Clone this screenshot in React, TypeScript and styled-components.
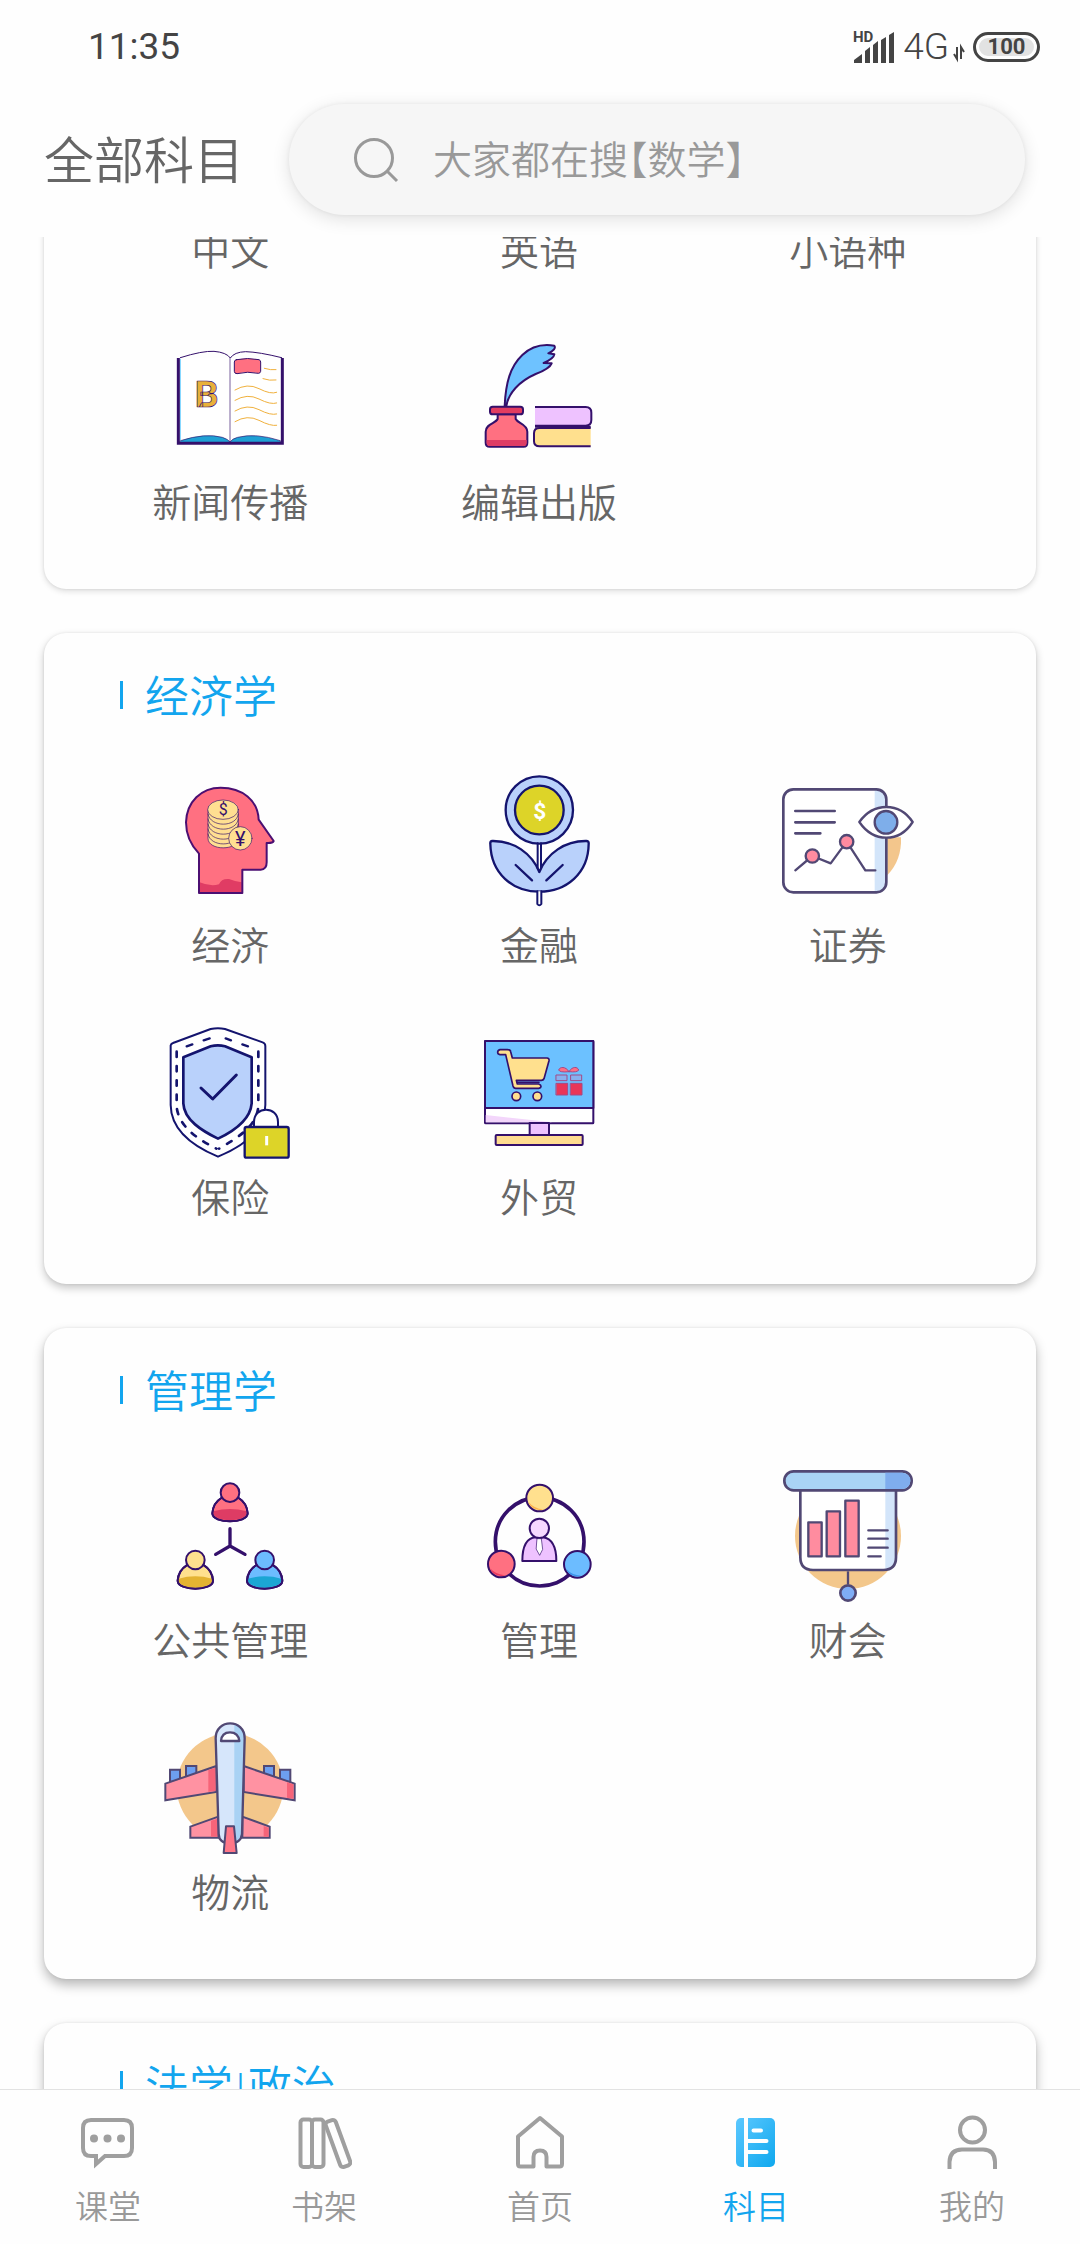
import React from "react";
import styled, { createGlobalStyle } from "styled-components";

const GlobalStyle = createGlobalStyle`
  * { box-sizing: border-box; }
  body {
    margin: 0;
    background: #fefefe;
    color: #666;
    font-family: Roboto, "Noto Sans CJK SC", sans-serif;
    font-weight: 350;
  }
  button, input { font: inherit; color: inherit; border: 0; padding: 0; background: none; }
`;

const Screen = styled.div`
  height: 100vh;
  display: flex;
  flex-direction: column;
  overflow: hidden;
`;

/* ---------- status bar ---------- */

const StatusBar = styled.div`
  flex: none;
  height: 94px;
  padding: 0 40px 0 88px;
  display: flex;
  align-items: center;
  justify-content: space-between;
  color: #444;
  font-size: 37px;
  line-height: 44px;
  font-weight: 400;
`;

const StatusIcons = styled.div`
  display: flex;
  align-items: center;
  gap: 8px;
  font-weight: 350;
`;

const Network = styled.span`
  display: flex;
  align-items: center;
  gap: 4px;
`;

const Battery = styled.div`
  width: 67px;
  height: 30px;
  border: 3px solid #444;
  border-radius: 15px;
  background: #e2e2e2;
  box-shadow: inset 0 0 0 3px #fefefe;
  display: flex;
  align-items: center;
  justify-content: center;
  font-size: 22px;
  line-height: 24px;
  font-weight: 700;
`;

/* ---------- header ---------- */

const Header = styled.header`
  flex: none;
  display: flex;
  align-items: center;
  gap: 45px;
  padding: 10px 55px 22px 44px;
`;

const PageTitle = styled.h1`
  margin: 0;
  padding-top: 5px;
  flex: none;
  font-size: 50px;
  line-height: 60px;
  font-weight: 350;
`;

const SearchPill = styled.label`
  flex: 1;
  min-width: 0;
  height: 111px;
  padding: 0 64px;
  border-radius: 56px;
  background: #f6f6f6;
  box-shadow: 0 4px 18px rgba(0, 0, 0, 0.12), 0 0 4px rgba(0, 0, 0, 0.06);
  display: flex;
  align-items: center;
  gap: 34px;
`;

const SearchInput = styled.input`
  flex: 1;
  min-width: 0;
  padding-top: 3px;
  outline: 0;
  font-size: 39px;
  line-height: 60px;
  font-feature-settings: "halt";
  &::placeholder { color: #999; opacity: 1; }
`;

/* ---------- subject list ---------- */

const ListViewport = styled.main`
  flex: 1;
  min-height: 0;
  overflow: hidden;
`;

const CardList = styled.div`
  margin-top: -7px;
  padding: 0 44px;
  display: flex;
  flex-direction: column;
  gap: 44px;
`;

const shadows = [
  "0 2px 6px rgba(0,0,0,.14), 0 0 3px rgba(0,0,0,.08)",
  "0 4px 9px rgba(0,0,0,.22), 0 0 3px rgba(0,0,0,.08)",
  "0 6px 12px rgba(0,0,0,.28), 0 0 3px rgba(0,0,0,.08)",
];

const Card = styled.section<{ $depth: number; $cut?: boolean }>`
  padding: ${(p) => (p.$cut ? 0 : 36)}px 34px 53px 32px;
  border-radius: ${(p) => (p.$cut ? "0 0 22px 22px" : "22px")};
  background: #fefefe;
  box-shadow: ${(p) => shadows[p.$depth]};
`;

const CardTitle = styled.h2`
  margin: 0;
  padding-left: 44px;
  display: flex;
  align-items: center;
  gap: 22px;
  color: #12a5ee;
  font-size: 44px;
  line-height: 58px;
  font-weight: 350;
`;

const TitleBar = styled.span`
  width: 3px;
  height: 28px;
  margin-bottom: 6px;
  background: #12a5ee;
`;

const Divider = styled.span`
  font-size: 28px;
  line-height: 28px;
  padding: 0 4px;
  vertical-align: 10px;
  font-weight: 400;
`;

const Grid = styled.div`
  display: grid;
  grid-template-columns: repeat(3, 1fr);
`;

const Subject = styled.button<{ $labelOnly?: boolean }>`
  padding: ${(p) => (p.$labelOnly ? 0 : 48)}px 0 10px;
  display: flex;
  flex-direction: column;
  align-items: center;
  gap: 18px;
  font-size: 39px;
  line-height: 44px;
`;

const Art = styled.svg`
  display: block;
  width: 132px;
  height: 132px;
  stroke-linecap: round;
  stroke-linejoin: round;
`;

/* ---------- bottom navigation ---------- */

const Nav = styled.nav`
  flex: none;
  display: grid;
  grid-template-columns: repeat(5, 1fr);
  border-top: 1px solid #e2e2e2;
  background: #fefefe;
`;

const NavItem = styled.button<{ $active?: boolean }>`
  padding: 24px 0 14px;
  display: flex;
  flex-direction: column;
  align-items: center;
  gap: 16px;
  color: ${(p) => (p.$active ? "#12a5ee" : "#999")};
  font-size: 33px;
  line-height: 44px;
`;

const NavIcon = styled.svg`
  display: block;
  width: 56px;
  height: 56px;
  fill: none;
  stroke: #9f9f9f;
  stroke-width: 4;
`;

/* ---------- subject drawings ---------- */

const INK = "#34106b";
const NAVY = "#14146e";
const SLATE = "#514874";

const BookArt = () => (
  <Art viewBox="75 36 396 396" aria-hidden>
    <path d="M118 114V370H430V114" fill="#fff" />
    <path d="M124 362Q200 338 250 352Q268 358 273 366Q280 356 296 352Q350 338 424 362V370H124Z" fill="#1fa0d4" stroke={INK} strokeWidth="2" />
    <path d="M124 118V360" stroke="#6fd0ff" strokeWidth="3" />
    <path d="M118 114V370H430V114" fill="none" stroke={INK} strokeWidth="9" strokeLinecap="butt" strokeLinejoin="miter" />
    <path d="M124 113Q190 92 225 94Q262 97 274 114Q286 96 320 95Q360 96 428 113" fill="none" stroke={INK} strokeWidth="3" />
    <path d="M273 114V364" stroke={INK} strokeWidth="2" />
    <path d="M292 119Q326 112 360 119Q365 121 365 126V154Q364 160 358 160Q326 153 294 161Q286 161 286 154V126Q286 120 292 119Z" fill="#ff7081" stroke={INK} strokeWidth="3" />
    <text x="203" y="260" textAnchor="middle" fontFamily="Roboto, sans-serif" fontWeight="700" fontSize="112" fill="#e8b13a" stroke={INK} strokeWidth="2">B</text>
    <g fill="none" stroke="#f0b13e" strokeWidth="3">
      <path d="M376 145Q396 151 411 149M372 176Q392 183 411 180" />
      <path d="M288 210Q325 188 360 206T413 217M288 241Q325 219 360 237T413 249M288 273Q325 251 360 269T413 282M288 305Q325 283 360 301T413 316" />
    </g>
  </Art>
);

const QuillArt = () => (
  <Art viewBox="1002 36 396 396" aria-hidden>
    <g stroke={INK} strokeWidth="6">
      <path d="M1097 258C1100 190 1113 140 1150 105C1180 76 1215 72 1246 77Q1253 88 1228 100L1246 103Q1244 116 1214 129L1238 130Q1232 146 1190 162C1140 184 1108 220 1102 258" fill="#6ec2ff" />
      <path d="M1076 283V297C1070 310 1040 312 1040 335V368Q1040 380 1052 380H1154Q1165 380 1165 368V335C1165 312 1136 310 1130 297V283Z" fill="#ff7081" />
      <path d="M1043 360H1163V368Q1163 378 1154 378H1052Q1043 378 1043 368Z" fill="#de3c64" stroke="none" />
      <rect x="1053" y="260" width="99" height="23" rx="8" fill="#e23c60" />
      <path d="M1188 261H1340Q1357 261 1357 278V300Q1357 317 1340 317H1188" fill="#eec2ff" strokeLinecap="butt" />
      <path d="M1355 324H1202Q1185 324 1185 340V364Q1185 379 1202 379H1355" fill="#ffe08e" strokeLinecap="butt" />
      <path d="M1188 320H1355" strokeLinecap="butt" />
    </g>
  </Art>
);

const HeadArt = () => (
  <Art viewBox="0 0 396 396" aria-hidden>
    <path d="M105 354V236C80 210 66 180 66 142C68 80 112 38 170 38C235 38 282 76 284 134L329 198Q326 205 308 204V262Q308 284 290 284H235V354Z" fill="#ff7081" />
    <path d="M107 322Q140 336 165 328Q172 310 195 312Q215 320 233 322V352H107Z" fill="#e03c64" />
    <path d="M105 354V236C80 210 66 180 66 142C68 80 112 38 170 38C235 38 282 76 284 134L329 198Q326 205 308 204V262Q308 284 290 284H235V354Z" fill="none" stroke="#4b0f72" strokeWidth="6" />
    <g fill="#ffdf91" stroke={INK} strokeWidth="2">
      <path d="M132 105V190C132 228 223 228 223 190V105Z" />
      <path d="M132 117C138 158 218 158 223 117M132 132C138 173 218 173 223 132M132 147C138 188 218 188 223 147M132 162C138 203 218 203 223 162M132 177C138 217 218 217 223 177" fill="none" />
      <ellipse cx="177" cy="104" rx="46" ry="29" />
      <circle cx="229" cy="190" r="35" />
    </g>
    <g fill={INK} textAnchor="middle" fontFamily="Roboto, sans-serif">
      <text x="178" y="120" fontSize="48" fontWeight="400">$</text>
      <text x="229" y="212" fontSize="60" fontWeight="400">¥</text>
    </g>
  </Art>
);

const FlowerArt = () => (
  <Art viewBox="42 75 396 396" aria-hidden>
    <g stroke={NAVY} strokeWidth="7" fill="#b9d1fb">
      <circle cx="241" cy="180" r="101" />
      <circle cx="241" cy="180" r="73" fill="#ddd428" />
      <path d="M241 366C218 310 165 272 100 273Q93 273 94 282C96 370 160 425 241 425C322 425 388 370 389 282Q390 273 382 273C318 272 264 310 241 366Z" />
      <path d="M170 345L219 391M311 345L262 391" />
      <path d="M236 280V355M246 280V355" strokeWidth="6" />
      <path d="M235 424V462Q241 470 247 462V424" fill="#fff" strokeWidth="6" />
    </g>
    <text x="242" y="206" textAnchor="middle" fontFamily="Roboto, sans-serif" fontSize="68" fontWeight="700" fill="#fff">$</text>
  </Art>
);

const ReportArt = () => (
  <Art viewBox="966 75 396 396" aria-hidden>
    <path d="M1282 376Q1326 330 1323 262H1282Z" fill="#f3c68c" />
    <rect x="970" y="118" width="309" height="309" rx="30" fill="#fff" />
    <path d="M1244 118Q1279 118 1279 150V395Q1279 427 1244 427Z" fill="#d3e5fa" />
    <g fill="none" stroke={SLATE} strokeWidth="8">
      <rect x="970" y="118" width="309" height="309" rx="30" />
      <path d="M1006 183H1124M1006 217H1124M1006 250H1081" />
      <path d="M1006 361L1057 318L1112 340L1160 275L1216 361H1246" strokeWidth="7" />
      <circle cx="1057" cy="318" r="20" fill="#ff8ba0" strokeWidth="7" />
      <circle cx="1160" cy="275" r="20" fill="#ff8ba0" strokeWidth="7" />
      <path d="M1198 216Q1230 171 1279 171T1358 216Q1328 263 1279 263T1198 216Z" fill="#fff" strokeWidth="7" />
      <circle cx="1278" cy="217" r="34" fill="#7eaeea" strokeWidth="7" />
    </g>
  </Art>
);

const ShieldArt = () => (
  <Art viewBox="75 81 396 396" aria-hidden>
    <g fill="none" stroke={NAVY} strokeWidth="6">
      <path d="M95 136Q96 131 102 129L215 87Q237 82 258 87L371 127Q379 130 379 138V315C378 395 310 440 237 470C165 440 96 395 95 315Z" fill="#fff" />
      <path d="M113 155V320C118 380 180 420 232 446M358 155V320C352 380 300 410 240 446" strokeWidth="8" strokeDasharray="16 27" />
      <path d="M143 139L160 133M194 121L212 115M260 115L276 121M310 133L327 139" strokeWidth="7" />
      <path d="M133 172L215 139Q237 133 258 139L338 172V310C334 360 285 393 237 416C190 393 135 360 133 310Z" fill="#b9d1fb" strokeWidth="8" />
      <path d="M186 264L221 297L292 225" strokeWidth="9" />
      <path d="M345 380V366C345 317 417 317 417 366V380" fill="#fff" />
      <rect x="317" y="381" width="132" height="92" rx="6" fill="#ddd428" strokeWidth="7" />
    </g>
    <path d="M383 408V436" stroke="#fff" strokeWidth="9" strokeLinecap="butt" />
  </Art>
);

const ShopArt = () => (
  <Art viewBox="1002 81 396 396" aria-hidden>
    <g stroke={INK} strokeWidth="6">
      <rect x="1038" y="123" width="325" height="247" rx="2" fill="#fff" />
      <path d="M1040 345L1240 367H1040Z" fill="#f3d6fb" stroke="none" />
      <path d="M1038 123H1363V324H1038Z" fill="#6cc1ff" />
      <path d="M1172 369H1230V405H1172Z" fill="#eec2ff" />
      <rect x="1070" y="405" width="261" height="30" rx="3" fill="#ffdc90" />
    </g>
    <g stroke={INK} strokeWidth="5" fill="#ffe08e">
      <path d="M1083 149H1105Q1114 149 1115 155L1120 174H1224Q1231 174 1230 182L1215 236Q1213 241 1207 241H1132L1135 252H1199Q1206 254 1206 259T1199 265H1130Q1124 265 1122 258L1100 164H1083Q1076 163 1076 157T1083 149Z" />
      <path d="M1134 247H1200" />
      <circle cx="1132" cy="289" r="13" />
      <circle cx="1195" cy="289" r="13" />
    </g>
    <g stroke="#a34a86" strokeWidth="3">
      <path d="M1252 250H1286V285H1252ZM1295 250H1329V285H1295Z" fill="#e93558" />
      <path d="M1252 225H1284V242H1252ZM1296 225H1328V242H1296Z" fill="#88b0ee" />
      <path d="M1290 215C1280 198 1262 200 1259 210Q1262 218 1290 215C1300 198 1316 200 1319 210Q1316 218 1290 215Z" fill="#ff6e83" />
    </g>
  </Art>
);

const Person = ({ x, y, top, low }: { x: number; y: number; top: string; low: string }) => (
  <g transform={`translate(${x} ${y})`} stroke={INK} strokeWidth="6">
    <path d="M-26 16C-46 28 -52 48 -53 62C-53 94 53 94 53 62C52 48 46 28 26 16Z" fill={top} />
    <path d="M-50 56Q0 42 50 56C58 92 -58 92 -50 56Z" fill={low} stroke="none" />
    <path d="M-26 16C-46 28 -52 48 -53 62C-53 94 53 94 53 62C52 48 46 28 26 16" fill="none" />
    <circle r="28" fill={top} />
  </g>
);

const PublicArt = () => (
  <Art viewBox="75 30 396 396" aria-hidden>
    <Person x={273} y={98} top="#ff7081" low="#de3c64" />
    <Person x={169} y={300} top="#ffe08e" low="#e4b332" />
    <Person x={377} y={300} top="#6cbcff" low="#1ba6d4" />
    <path d="M273 206V258M230 283L273 258L318 283" fill="none" stroke={INK} strokeWidth="10" />
  </Art>
);

const ManageArt = () => (
  <Art viewBox="1002 30 396 396" aria-hidden>
    <circle cx="1202" cy="245" r="133" fill="none" stroke={INK} strokeWidth="11" />
    <g stroke={INK} strokeWidth="6">
      <circle cx="1202" cy="114" r="40" fill="#ffe08e" />
      <circle cx="1087" cy="312" r="40" fill="#ff7081" />
      <circle cx="1315" cy="313" r="40" fill="#6cbcff" />
      <path d="M1150 303Q1150 235 1190 232H1212Q1252 238 1252 303Z" fill="#eec2ff" />
      <circle cx="1201" cy="205" r="29" fill="#f6d8ff" />
      <path d="M1195 236H1207L1211 268L1202 286L1192 268Z" fill="#fff" strokeWidth="2" />
    </g>
    <path d="M1168 125A36 36 0 0 0 1213 148Q1185 146 1168 125Z" fill="#ffb24d" />
    <path d="M1053 325A36 36 0 0 0 1098 346Q1070 344 1053 325Z" fill="#e8375d" />
    <path d="M1281 326A36 36 0 0 0 1326 347Q1298 345 1281 326Z" fill="#3b93ea" />
  </Art>
);

const FinanceArt = () => (
  <Art viewBox="126 90 396 396" aria-hidden>
    <circle cx="324" cy="288" r="159" fill="#f3c78b" />
    <path d="M181 110H468V352Q468 390 430 390H219Q181 390 181 352Z" fill="#fff" />
    <path d="M436 130H468V352Q466 380 436 388Z" fill="#d3e5fa" />
    <g stroke={SLATE} strokeWidth="8">
      <path d="M181 150V352Q181 390 219 390H430Q468 390 468 352V150" fill="none" />
      <rect x="133" y="94" width="382" height="57" rx="28" fill="#a9d3f5" />
    </g>
    <path d="M436 98H487Q511 101 511 122T487 147H436Z" fill="#7fadee" />
    <g fill="#ff8c9f" stroke={SLATE} strokeWidth="7">
      <path d="M205 247H245V349H205ZM260 214H300V349H260ZM316 182H356V349H316Z" />
      <path d="M385 271H443M385 296H443M385 323H443M385 349H422" />
      <path d="M324 394V432" strokeLinecap="butt" />
      <circle cx="324" cy="459" r="23" fill="#7fadf5" strokeWidth="8" />
    </g>
  </Art>
);

const PlaneArt = () => (
  <Art viewBox="105 66 396 396" aria-hidden>
    <circle cx="303" cy="260" r="160" fill="#f3c78b" />
    <rect x="230" y="380" width="150" height="60" fill="#fefefe" />
    <g stroke={SLATE} strokeWidth="6" strokeLinejoin="miter">
      <path d="M123 209H153V245H123ZM171 198H202V230H171ZM405 198H435V230H405ZM453 209H484V245H453Z" fill="#6d9ff0" />
      <path d="M262 198L109 251V301L262 276ZM344 198L497 251V301L344 276Z" fill="#ff92a2" />
      <path d="M268 350L184 380V413H268ZM340 350L422 380V413H340Z" fill="#ff92a2" />
    </g>
    <path d="M238 210L260 203V272L238 276ZM474 247L493 253V296L474 293ZM246 362L266 356V410H246ZM404 378L419 383V410H404Z" fill="#f66479" />
    <path d="M260 115C260 55 347 55 347 115L339 402Q336 430 303 430T269 402Z" fill="#d6e6fb" />
    <path d="M316 73Q347 80 347 115L339 402Q337 424 316 429Z" fill="#a9d2f4" />
    <path d="M260 115C260 55 347 55 347 115L339 402Q336 430 303 430T269 402Z" fill="none" stroke={SLATE} strokeWidth="7" />
    <path d="M276 123Q278 97 303 97T331 123Z" fill="#fff" stroke={SLATE} strokeWidth="7" />
    <path d="M291 379H315L323 459H284Z" fill="#ff7688" stroke={SLATE} strokeWidth="6" />
  </Art>
);

/* ---------- navigation drawings ---------- */

const ChatIcon = () => (
  <NavIcon viewBox="0 0 56 56" aria-hidden>
    <path d="M11 6H44Q52 6 52 14V34Q52 42 44 42H25L16 50V42H11Q3 42 3 34V14Q3 6 11 6Z" />
    <g fill="#9f9f9f" stroke="none">
      <circle cx="14" cy="24.5" r="4" /><circle cx="27.5" cy="24.5" r="4" /><circle cx="41" cy="24.5" r="4" />
    </g>
  </NavIcon>
);

const BooksIcon = () => (
  <NavIcon viewBox="0 0 56 56" aria-hidden>
    <rect x="4.5" y="5.5" width="11.5" height="47.5" rx="3" />
    <rect x="16" y="5.5" width="11.5" height="47.5" rx="3" />
    <rect x="-5.3" y="-24" width="10.6" height="48" rx="3" transform="translate(42 29.5) rotate(-20)" />
  </NavIcon>
);

const HomeIcon = () => (
  <NavIcon viewBox="0 0 56 56" aria-hidden strokeLinejoin="round">
    <path d="M28 4L6 22.5V50Q6 52.5 8.5 52.5H21.5V43Q21.5 36.5 28 36.5T34.5 43V52.5H47.5Q50 52.5 50 50V22.5Z" />
  </NavIcon>
);

const SubjectIcon = () => (
  <NavIcon viewBox="0 0 56 56" aria-hidden>
    <defs>
      <linearGradient id="subjectFill" x1="0" y1="0" x2="1" y2="1">
        <stop offset="0" stopColor="#5cc8ff" /><stop offset="1" stopColor="#0fa8ee" />
      </linearGradient>
    </defs>
    <rect x="8" y="4" width="39" height="49" rx="5" fill="url(#subjectFill)" stroke="none" />
    <path d="M18 3V54" stroke="#fefefe" />
    <path d="M25.5 16.5H33M20 27H38.500M20 38H38.5" stroke="#fff" strokeLinecap="round" />
  </NavIcon>
);

const UserIcon = () => (
  <NavIcon viewBox="0 0 56 56" aria-hidden>
    <circle cx="28.5" cy="16" r="12.5" />
    <path d="M5.5 55V48Q6 35.5 18 35.5H39Q50.5 35.5 51 48V55" />
  </NavIcon>
);

/* ---------- data ---------- */

type Item = { name: string; art?: React.ComponentType };
type Group = { title?: React.ReactNode; depth: number; items: Item[] };

const groups: Group[] = [
  {
    depth: 0,
    items: [
      { name: "中文" }, { name: "英语" }, { name: "小语种" },
      { name: "新闻传播", art: BookArt }, { name: "编辑出版", art: QuillArt },
    ],
  },
  {
    title: "经济学",
    depth: 1,
    items: [
      { name: "经济", art: HeadArt }, { name: "金融", art: FlowerArt }, { name: "证券", art: ReportArt },
      { name: "保险", art: ShieldArt }, { name: "外贸", art: ShopArt },
    ],
  },
  {
    title: "管理学",
    depth: 2,
    items: [
      { name: "公共管理", art: PublicArt }, { name: "管理", art: ManageArt }, { name: "财会", art: FinanceArt },
      { name: "物流", art: PlaneArt },
    ],
  },
  { title: <>法学<Divider>|</Divider>政治</>, depth: 2, items: [] },
];

const tabs = [
  { name: "课堂", icon: ChatIcon },
  { name: "书架", icon: BooksIcon },
  { name: "首页", icon: HomeIcon },
  { name: "科目", icon: SubjectIcon, active: true },
  { name: "我的", icon: UserIcon },
];

export default function App() {
  return (
    <Screen>
      <GlobalStyle />
      <StatusBar>
        <span>11:35</span>
        <StatusIcons>
          <svg width="42" height="34" viewBox="0 -2 42 34" fill="#444" aria-hidden>
            <path d="M1 31V28L9 22V31ZM12 31V19L17 15V31ZM20 31V13L25 9V31ZM28 31V8L33 5V31ZM36 31V3L41 0V31Z" />
            <text x="0" y="10" fontFamily="Roboto, sans-serif" fontSize="15" fontWeight="700">HD</text>
          </svg>
          <Network>
            <span>4G</span>
            <svg width="12" height="32" viewBox="0 0 12 32" fill="none" stroke="#444" strokeWidth="2" aria-hidden>
              <path d="M4 16V28L1 23M8 28V16L11 21" />
            </svg>
          </Network>
          <Battery>100</Battery>
        </StatusIcons>
      </StatusBar>
      <Header>
        <PageTitle>全部科目</PageTitle>
        <SearchPill>
          <svg width="46" height="46" viewBox="0 0 46 46" fill="none" stroke="#999" strokeWidth="3" aria-hidden>
            <circle cx="21" cy="21" r="18.5" />
            <path d="M34 34L44 44" />
          </svg>
          <SearchInput type="text" aria-label="搜索" placeholder="大家都在搜【数学】" />
        </SearchPill>
      </Header>
      <ListViewport>
        <CardList>
          {groups.map((g, i) => (
            <Card key={i} $depth={g.depth} $cut={!g.title}>
              {g.title && (
                <CardTitle>
                  <TitleBar />
                  <span>{g.title}</span>
                </CardTitle>
              )}
              <Grid>
                {g.items.map(({ name, art: Drawing }) => (
                  <Subject type="button" key={name} $labelOnly={!Drawing}>
                    {Drawing && <Drawing />}
                    <span>{name}</span>
                  </Subject>
                ))}
              </Grid>
            </Card>
          ))}
        </CardList>
      </ListViewport>
      <Nav>
        {tabs.map(({ name, icon: Icon, active }) => (
          <NavItem type="button" key={name} $active={active}>
            <Icon />
            <span>{name}</span>
          </NavItem>
        ))}
      </Nav>
    </Screen>
  );
}
